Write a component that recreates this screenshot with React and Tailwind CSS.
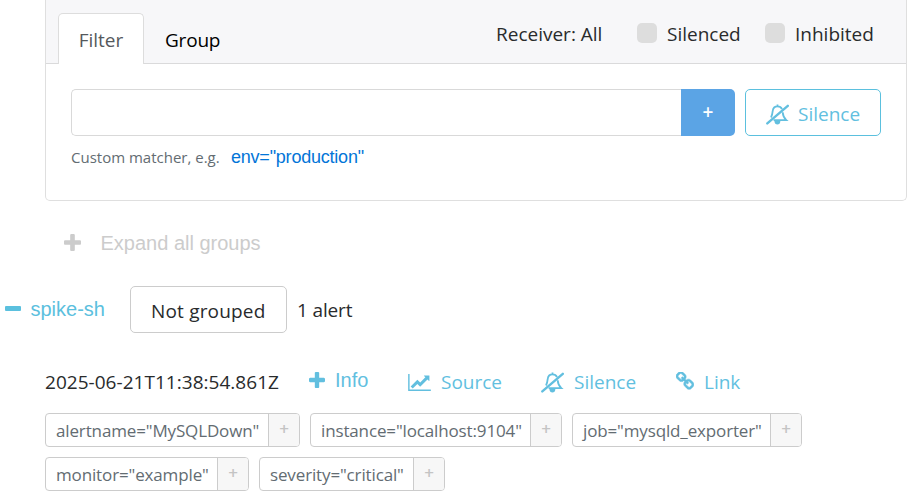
import React from "react";

const PLUS =
  "M1600 736v192q0 40-28 68t-68 28h-416v416q0 40-28 68t-68 28h-192q-40 0-68-28t-28-68v-416h-416q-40 0-68-28t-28-68v-192q0-40 28-68t68-28h416v-416q0-40 28-68t68-28h192q40 0 68 28t28 68v416h416q40 0 68 28t28 68z";
const LINK =
  "M1520 1216q0-40-28-68l-208-208q-28-28-68-28-42 0-72 32 3 3 19 18.5t21.5 21.5 15 19 13 25.5 3.5 27.5q0 40-28 68t-68 28q-15 0-27.5-3.5t-25.5-13-19-15-21.5-21.5-18.5-19q-33 31-33 73 0 40 28 68l206 207q27 27 68 27 40 0 68-26l147-146q28-28 28-67zm-703-705q0-40-28-68l-206-207q-28-28-68-28-39 0-68 27l-147 146q-28 28-28 67 0 40 28 68l208 208q27 27 68 27 42 0 72-31-3-3-19-18.5t-21.5-21.5-15-19-13-25.5-3.5-27.5q0-40 28-68t68-28q15 0 27.5 3.5t25.5 13 19 15 21.5 21.5 18.5 19q33-31 33-73zm895 705q0 120-85 203l-147 146q-83 83-203 83-121 0-204-85l-206-207q-83-83-83-203 0-123 88-209l-88-88q-86 88-208 88-120 0-204-84l-208-208q-84-84-84-204t85-203l147-146q83-83 203-83 121 0 204 85l206 207q83 83 83 203 0 123-88 209l88 88q86-88 208-88 120 0 204 84l208 208q84 84 84 204z";
const CHART =
  "M2048 1536v128h-2048v-1536h128v1408h1920zm-128-1248v435q0 21-19.5 29.5t-35.5-7.5l-121-121-633 633q-10 10-23 10t-23-10l-233-233-416 416-192-192 585-585q10-10 23-10t23 10l233 233 464-464-121-121q-16-16-7.5-35.5t29.5-19.5h435q14 0 23 9t9 23z";

function PlusIcon({ className }) {
  return (
    <svg viewBox="192 128 1408 1408" className={className} fill="currentColor">
      <path d={PLUS} />
    </svg>
  );
}

function BellSlash({ className }) {
  return (
    <svg viewBox="0 0 23 21" className={className} fill="none" stroke="currentColor">
      <path
        d="M5 13.4C6.3 11.4 6.5 9 6.7 7C7 4.2 8.8 2.4 11.5 2.4C13.6 2.4 15.2 3.4 16 5.2M16.7 8.3C16.9 11.7 18.1 14.2 20.3 16.2H7.6M11.5 0.6V2.8"
        strokeWidth="1.8"
      />
      <path d="M8.4 17H14.4C14.3 19.3 13.1 20.6 11.4 20.6S8.5 19.3 8.4 17Z" fill="currentColor" stroke="none" />
      <path d="M1.3 19.4L21.8 1.8" strokeWidth="2.4" strokeLinecap="round" />
    </svg>
  );
}

function Label({ text, className }) {
  return (
    <div className={`flex h-[34px] overflow-hidden rounded-[4px] border border-[#ccc] ${className}`}>
      <div className="flex flex-1 items-center pl-[10px] pt-[2px] text-[17px] tracking-[-0.14px] text-[#636c72]">
        <span className="whitespace-nowrap">{text}</span>
      </div>
      <div className="flex w-[31px] shrink-0 items-center justify-center border-l border-[#ccc] bg-[#f7f7f7] pb-[3px] text-[17px] font-semibold text-[#c4c4c4]">
        +
      </div>
    </div>
  );
}

export default function App() {
  return (
    <div className="h-[501px] w-[915px] overflow-hidden bg-white font-['Open_Sans','Noto_Sans',sans-serif] text-[19px] leading-[28px] text-[#292b2c]">
      <div className="ml-[45px] h-[201px] w-[862px] rounded-b-[5px] border border-t-0 border-[#dfdfdf]">
        <div className="flex h-[64px] items-end border-b border-[#dadadb] bg-[#f7f7f9] pl-[12px]">
          <div className="-mb-px flex h-[51px] w-[86px] items-center justify-center rounded-t-[5px] border border-b-0 border-[#ddd] bg-white pt-[2px] text-[#55595c]">
            <span className="whitespace-nowrap">Filter</span>
          </div>
          <div className="ml-[21px] flex h-[50px] w-[331px] items-center pt-[4px] text-black">
            <span className="whitespace-nowrap tracking-[-0.2px]">Group</span>
          </div>
          <div className="flex h-[60px] w-[141px] items-center pt-[2px]">
            <span className="whitespace-nowrap">Receiver: All</span>
          </div>
          <div className="flex h-[60px] w-[128px] items-center gap-[10px] pt-[2px]">
            <span className="mb-[3px] h-[20px] w-[20px] rounded-[5px] bg-[#ddd]" />
            <span className="whitespace-nowrap">Silenced</span>
          </div>
          <div className="flex h-[60px] items-center gap-[10px] pt-[2px]">
            <span className="mb-[3px] h-[20px] w-[20px] rounded-[5px] bg-[#ddd]" />
            <span className="whitespace-nowrap">Inhibited</span>
          </div>
        </div>
        <div className="flex pl-[25px] pt-[25px]">
          <div className="h-[47px] w-[610px] rounded-l-[5px] border border-r-0 border-[#d9d9d9]" />
          <div className="flex h-[47px] w-[54px] items-center justify-center rounded-r-[5px] bg-[#5ba4e5] pb-[2px] font-semibold text-white">
            +
          </div>
          <div className="ml-[10px] flex h-[47px] w-[136px] items-center rounded-[5px] border border-[#5bc0de] pl-[20px] pt-[3px] text-[#62bfdf]">
            <BellSlash className="h-[21px] w-[23px]" />
            <span className="ml-[9px] whitespace-nowrap">Silence</span>
          </div>
        </div>
        <div className="flex h-[42px] items-center pl-[25px]">
          <span className="w-[160px] whitespace-nowrap text-[15px] text-[#636c72]">Custom matcher, e.g.</span>
          <span className="whitespace-nowrap font-['Liberation_Sans',sans-serif] text-[18px] tracking-[-0.22px] text-[#0275d8]">
            env="production"
          </span>
        </div>
      </div>

      <div className="flex h-[85px] items-center pb-[2px] pl-[64px] font-['Liberation_Sans',sans-serif] text-[20px] text-[#ccc]">
        <PlusIcon className="h-[17px] w-[17px]" />
        <span className="ml-[19.5px] whitespace-nowrap">Expand all groups</span>
      </div>

      <div className="flex h-[47px] items-center">
        <span className="mb-[2px] ml-[5px] h-[5px] w-[16px] rounded-[1px] bg-[#5bc0de]" />
        <span className="mb-[2px] ml-[9.5px] w-[99.5px] whitespace-nowrap font-['Liberation_Sans',sans-serif] text-[20px] text-[#5bc0de]">
          spike-sh
        </span>
        <div className="flex h-[47px] w-[157px] items-center rounded-[5px] border border-[#ccc] pl-[20px] pt-[3px]">
          <span className="whitespace-nowrap tracking-[0.18px]">Not grouped</span>
        </div>
        <span className="ml-[10px] whitespace-nowrap tracking-[-0.15px]">1 alert</span>
      </div>

      <div className="mt-[35px] flex h-[28px] items-center pl-[45px] text-[#62bfdf]">
        <span className="w-[264px] whitespace-nowrap tracking-[0.03px] text-[#292b2c]">2025-06-21T11:38:54.861Z</span>
        <PlusIcon className="mb-[5px] h-[16px] w-[16px]" />
        <span className="mb-[4px] ml-[10px] w-[73px] whitespace-nowrap font-['Liberation_Sans',sans-serif] text-[20px]">
          Info
        </span>
        <svg viewBox="0 128 2048 1536" className="h-[17px] w-[23px]" fill="currentColor">
          <path d={CHART} />
        </svg>
        <span className="ml-[10px] w-[100px] whitespace-nowrap">Source</span>
        <BellSlash className="h-[21px] w-[23px]" />
        <span className="ml-[10px] w-[102px] whitespace-nowrap">Silence</span>
        <svg viewBox="80 70 1640 1640" className="mb-[2px] h-[18px] w-[18px]" fill="currentColor" stroke="currentColor" strokeWidth="50">
          <path d={LINK} />
        </svg>
        <span className="ml-[10px] whitespace-nowrap">Link</span>
      </div>

      <div className="mt-[17px] flex flex-wrap gap-[10px] pl-[45px]">
        <Label text={'alertname="MySQLDown"'} className="w-[255px]" />
        <Label text={'instance="localhost:9104"'} className="w-[252px]" />
        <Label text={'job="mysqld_exporter"'} className="w-[230px]" />
        <Label text={'monitor="example"'} className="w-[204px]" />
        <Label text={'severity="critical"'} className="w-[186px]" />
      </div>
    </div>
  );
}
